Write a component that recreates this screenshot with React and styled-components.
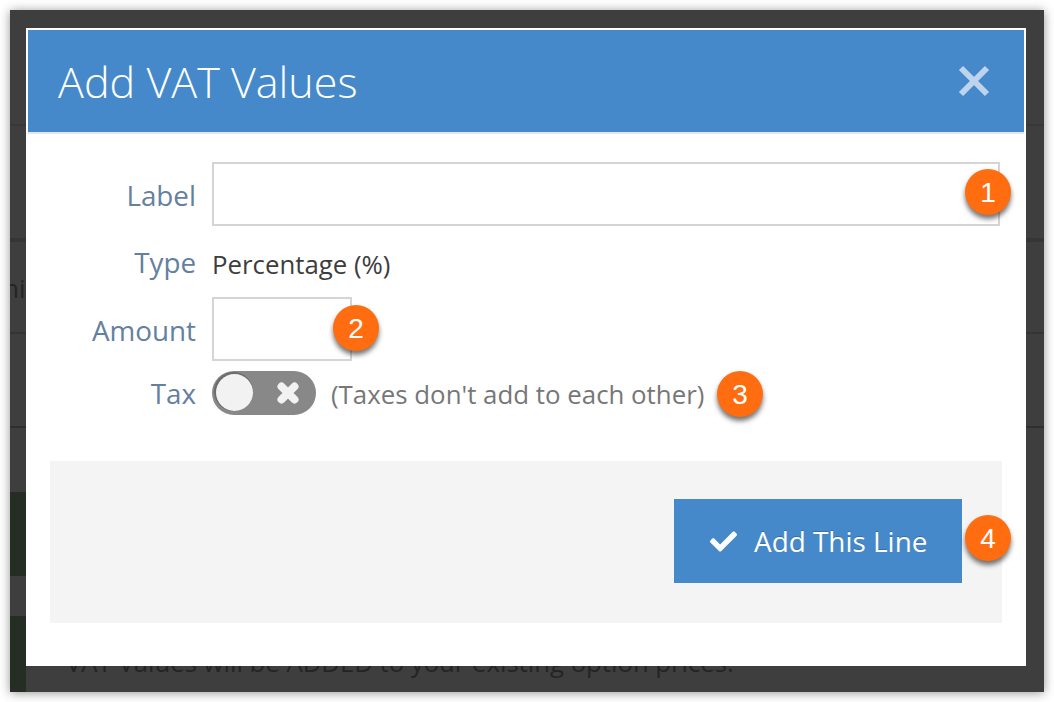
import React from 'react'
import styled, { createGlobalStyle } from 'styled-components'
import { FaCheck } from 'react-icons/fa'

const Global = createGlobalStyle`
  html, body { margin: 0; padding: 0; background: #fff; }
  * { box-sizing: border-box; }
  body { font-family: "Open Sans", "Liberation Sans", sans-serif; }
`

const Page = styled.div`
  width: 1054px;
  height: 702px;
  padding: 10px;
  overflow: hidden;
`

const Win = styled.div`
  position: relative;
  width: 1034px;
  height: 682px;
  background: #3e3e3e;
  box-shadow: 0 1px 10px rgba(0, 0, 0, 0.42);
  overflow: hidden;
`

const BackRow = styled.div`
  height: ${p => p.$h}px;
  border-bottom: ${p => p.$line}px solid ${p => p.$color || '#363636'};
  display: flex;
  align-items: center;
  font-size: 25.7px;
  color: #242424;
`

const BackWord = styled.span`
  margin-left: -16px;
  padding-top: 2px;
`

const BackLower = styled.div`
  display: flex;
  margin-top: 64px;
  height: 200px;
`

const GreenRail = styled.div`
  width: 16px;
  display: flex;
  flex-direction: column;
  gap: 40px;
`

const GreenBlock = styled.div`
  height: ${p => p.$h}px;
  background: #252d24;
`

const BackNote = styled.p`
  margin: 0 0 14px 40px;
  align-self: flex-end;
  font-size: 25.7px;
  line-height: 30px;
  color: #242424;
  white-space: nowrap;
`

const Modal = styled.div`
  position: absolute;
  left: 16px;
  top: 18px;
  width: 1000px;
  height: 638px;
  background: #fff;
  padding: 2px;
`

const Head = styled.div`
  height: 104px;
  background: #4589ca;
  border-bottom: 2px solid #e6e6e6;
  padding: 0 34px 0 30px;
  display: flex;
  align-items: center;
  justify-content: space-between;
`

const Title = styled.h1`
  margin: 0;
  font-size: 43.1px;
  font-weight: 300;
  color: #fff;
`

const CloseIcon = styled.svg`
  width: 32px;
  height: 32px;
  display: block;
`

const Body = styled.div`
  padding: 28px 22px 0 22px;
`

const Row = styled.div`
  display: flex;
  align-items: center;
  gap: 16px;
  margin-top: ${p => p.$top || 0}px;
  height: ${p => p.$h}px;
`

const Label = styled.label`
  width: 146px;
  padding-top: ${p => p.$drop || 0}px;
  text-align: right;
  font-size: 27.8px;
  line-height: 38px;
  color: #64809f;
`

const Field = styled.input`
  display: block;
  width: ${p => p.$w}px;
  height: 64px;
  border: 2px solid #d5d5d5;
  background: #fff;
  outline: none;
  border-radius: 0;
  padding: 0 10px;
`

const Value = styled.span`
  padding-top: 3px;
  font-size: 25.8px;
  line-height: 38px;
  color: #3d3d3d;
`

const Note = styled.span`
  padding-top: 2px;
  font-size: 25.85px;
  line-height: 38px;
  color: #777;
  margin-left: -1px;
`

const Toggle = styled.div`
  width: 104px;
  height: 44px;
  border-radius: 22px;
  background: #888;
  padding: 3px 16px 0 4px;
  display: flex;
  justify-content: space-between;
`

const Knob = styled.div`
  width: 37px;
  height: 37px;
  border-radius: 50%;
  background: #f2f2f2;
  box-shadow: -1px -1px 0 1px #6c6c6c;
`

const ToggleX = styled.svg`
  width: 24px;
  height: 24px;
  margin-top: 7px;
`

const Panel = styled.div`
  margin-top: 46px;
  width: 952px;
  height: 162px;
  background: #f4f4f4;
  padding: 38px 40px 0 0;
  display: flex;
  justify-content: flex-end;
  align-items: flex-start;
`

const AddButton = styled.button`
  width: 288px;
  height: 84px;
  border: none;
  border-radius: 0;
  background: #4589ca;
  color: #fff;
  font-family: inherit;
  font-size: 27.9px;
  display: flex;
  align-items: center;
  padding: 0 0 0 36px;
  gap: 17px;
  text-shadow: 0 -1px 0 rgba(0, 0, 0, 0.2);
  svg {
    width: 27px;
    height: 27px;
    flex: none;
  }
`

const Badge = styled.div`
  position: absolute;
  left: ${p => p.$x - 10}px;
  top: ${p => p.$y - 10}px;
  width: 46px;
  height: 46px;
  border-radius: 50%;
  background: #ff6d10;
  box-shadow: 0 4px 5px rgba(0, 0, 0, 0.55);
  color: #fff;
  font-family: "Liberation Sans", Arial, sans-serif;
  font-size: 28px;
  line-height: 48px;
  text-align: center;
`

export default function App() {
  return (
    <Page>
      <Global />
      <Win>
        <BackRow $h={116} $line={2} $color="#383838" />
        <BackRow $h={116} $line={4} $color="#353535" />
        <BackRow $h={92} $line={2} $color="#343434">
          <BackWord>this</BackWord>
        </BackRow>
        <BackRow $h={94} $line={2} $color="#2f2f2f" />
        <BackLower>
          <GreenRail>
            <GreenBlock $h={84} />
            <GreenBlock $h={76} />
          </GreenRail>
          <BackNote>VAT Values will be ADDED to your existing option prices.</BackNote>
        </BackLower>

        <Modal>
          <Head>
            <Title>Add VAT Values</Title>
            <CloseIcon viewBox="0 0 32 32" aria-label="Close">
              <path d="M3 3 L29 29 M29 3 L3 29" stroke="#bdd4ec" strokeWidth="6" fill="none" />
            </CloseIcon>
          </Head>
          <Body>
            <Row $h={64}>
              <Label $drop={2}>Label</Label>
              <Field $w={788} />
            </Row>
            <Row $h={40} $top={16}>
              <Label>Type</Label>
              <Value>Percentage (%)</Value>
            </Row>
            <Row $h={64} $top={15}>
              <Label $drop={2}>Amount</Label>
              <Field $w={140} />
            </Row>
            <Row $h={44} $top={10}>
              <Label>Tax</Label>
              <Toggle>
                <Knob />
                <ToggleX viewBox="0 0 24 24">
                  <path d="M5.5 5.5 L18.5 18.5 M18.5 5.5 L5.5 18.5" stroke="#f2f2f2" strokeWidth="8" strokeLinecap="round" />
                </ToggleX>
              </Toggle>
              <Note>(Taxes don't add to each other)</Note>
            </Row>
            <Panel>
              <AddButton>
                <FaCheck />
                Add This Line
              </AddButton>
            </Panel>
          </Body>
        </Modal>

        <Badge $x={965} $y={169}>1</Badge>
        <Badge $x={333} $y={305}>2</Badge>
        <Badge $x={717} $y={371}>3</Badge>
        <Badge $x={965} $y={515}>4</Badge>
      </Win>
    </Page>
  )
}
